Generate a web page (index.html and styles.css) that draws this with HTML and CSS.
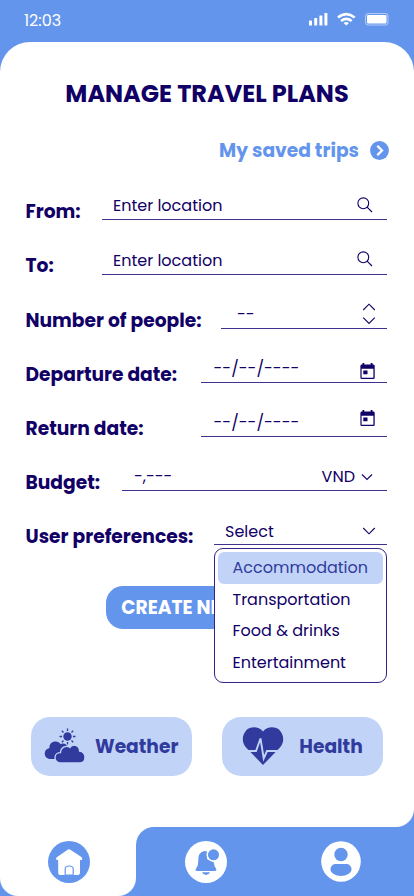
FILE: index.html
```html
<!DOCTYPE html>
<html lang="en">
<head>
<meta charset="utf-8">
<title>Manage travel plans</title>
<link rel="stylesheet" href="styles.css">
</head>
<body>
<div class="phone">
  <header class="status">
    <span class="time">12:03</span>
    <svg class="signals" width="82" height="16" viewBox="0 0 82 16" fill="#fff">
      <rect x="1" y="8.500" width="3" height="5" rx=".6"/><rect x="6.200" y="6" width="3" height="7.500" rx=".6"/><rect x="11.400" y="3.500" width="3" height="10" rx=".6"/><rect x="16.400" y="1" width="3" height="12.500" rx=".6"/>
      <g fill="none" stroke="#fff" stroke-width="2.500"><path d="M30 5.500Q38.300-1.300 46.700 5.500M33 9Q38.300 4.700 43.700 9"/></g><path d="M35.600 10.900Q38.300 8.900 41 10.900L38.300 13.500Z"/>
      <rect x="57.500" y="1.500" width="22.500" height="11.500" rx="2.500" fill="none" stroke="#fff" stroke-opacity=".5"/><rect x="59" y="3" width="19.500" height="8.500" rx="1"/>
    </svg>
  </header>
  <main class="sheet">
    <h1><span>MANAGE TRAVEL PLANS</span></h1>
    <a class="saved"><span>My saved trips</span>
      <svg width="19" height="19" viewBox="0 0 19 19"><circle cx="9.500" cy="9.500" r="9.400" fill="#6495ed"/><path d="M7.300 4.800L12 9.500L7.300 14.200" fill="none" stroke="#fff" stroke-width="2.300"/></svg>
    </a>
    <form class="fields">
      <div class="row"><label>From:</label><div class="field f-from"><span>Enter location</span><svg width="16" height="16" viewBox="0 0 16 16"><circle cx="6.300" cy="6.300" r="5.400"/><path d="M10.100 10.100L15 15"/></svg></div></div>
      <div class="row"><label>To:</label><div class="field f-from f-to"><span>Enter location</span><svg width="16" height="16" viewBox="0 0 16 16"><circle cx="6.300" cy="6.300" r="5.400"/><path d="M10.100 10.100L15 15"/></svg></div></div>
      <div class="row"><label>Number of people:</label><div class="field f-num"><span>--</span><svg width="14" height="22" viewBox="0 0 14 22"><path d="M1.200 7L7 1.200L12.800 7M1.200 14.700L7 20.500L12.800 14.700"/></svg></div></div>
      <div class="row"><label>Departure date:</label><div class="field f-date f-dep"><span>--/--/----</span><svg class="cal" width="15" height="17" viewBox="0 0 15 17"><path fill-rule="evenodd" d="M1.500 1.500H2.500V0H4.300V1.500H10.700V0H12.500V1.500H13.500Q14.700 1.700 14.700 3V14.700Q14.700 16 13.500 16H1.700Q.4 16 .4 14.700V3Q.4 1.600 1.500 1.500ZM1.600 5.700V14.800H13.400V5.700ZM3.300 7.500H7.500V11.300H3.300Z"/></svg></div></div>
      <div class="row"><label>Return date:</label><div class="field f-date f-ret"><span>--/--/----</span><svg class="cal" width="15" height="17" viewBox="0 0 15 17"><path fill-rule="evenodd" d="M1.500 1.500H2.500V0H4.300V1.500H10.700V0H12.500V1.500H13.500Q14.700 1.700 14.700 3V14.700Q14.700 16 13.500 16H1.700Q.4 16 .4 14.700V3Q.4 1.600 1.500 1.500ZM1.600 5.700V14.800H13.400V5.700ZM3.300 7.500H7.500V11.300H3.300Z"/></svg></div></div>
      <div class="row"><label>Budget:</label><div class="field f-bud"><span class="amount">-,---</span><span class="vnd">VND</span><svg width="12" height="8" viewBox="0 0 12 8"><path d="M1 1.500L6 6.500L11 1.500"/></svg></div></div>
      <div class="row"><label>User preferences:</label><div class="field f-pref"><span>Select</span><svg width="14" height="8" viewBox="0 0 14 8"><path d="M1.200 1L7 6.800L12.800 1"/></svg>
        <ul class="menu"><li class="active">Accommodation</li><li>Transportation</li><li>Food &amp; drinks</li><li>Entertainment</li></ul></div></div>
    </form>
    <button class="create">CREATE NEW</button>
    <div class="cards">
      <div class="card"><svg width="42" height="36" viewBox="0 0 42 36">
        <circle cx="23.500" cy="8.500" r="4.200"/><path class="rays" d="M23.500 .5V3M23.500 14V16.500M15.500 8.500H18M29 8.500H31.500M17.800 2.800L19.500 4.500M27.500 12.500L29.200 14.200M29.200 2.800L27.500 4.500M17.800 14.200L19.500 12.500"/>
        <path d="M6.500 31C3 31 .7 28.500 .7 25.500C.7 22.500 3 20.500 5.500 20C5 16 8 13.500 11.500 13.500C14 13.500 15.500 14.500 16.500 16C20 14.500 23 16.500 23.500 19V31Z"/>
        <path class="front" d="M16.500 35C13.500 35 11 32.800 11 29.700C11 26.500 13.500 24.700 16.500 24.700C16.500 19.500 22 16.800 26 19.500C28.500 15.700 35.300 16.500 35.600 23.200C38.800 23.200 41 26 41 29.200C40.800 32.500 38.500 35 35.500 35Z"/></svg><span>Weather</span></div>
      <div class="card health"><svg width="42" height="40" viewBox="0 0 42 40"><path d="M21 39L4.500 22C-1 16.500 0 8.500 5 3.500C10 .1 17 .7 21 5.500C25 .7 32 .1 37 3.500C42 8.500 43 16.500 37.500 22Z"/><path class="pulse" d="M4.500 25H14L18.500 12.500L21.700 32.500L25 25H37.500"/></svg><span>Health</span></div>
    </div>
  </main>
  <nav>
    <div class="home"><svg width="42" height="42" viewBox="0 0 42 42"><circle cx="21" cy="21" r="21" fill="#6495ed"/><path d="M9.500 15.700L20 8.500Q21 7.900 22 8.500L33 15.700Q35.300 17.500 33.500 19H32V32Q31.800 34 30 34H12Q10.300 34 10.200 32V19H9Q6.700 17.500 9.500 15.700Z" fill="#fff"/><path d="M17.200 34V28Q17.200 25 21.200 25Q25.200 25 25.200 28V34Z" fill="#fff" stroke="#6495ed" stroke-width="1.200"/></svg></div>
    <div class="rest"><svg width="42" height="42" viewBox="0 0 42 42"><circle cx="21" cy="21" r="21" fill="#fff"/><path d="M20 10C16 10.500 13.800 13 13.500 16.500C13 22 13.500 24.500 11 27.500Q9.700 30 12 30H30Q32 29.500 31 27.500Q29 25 28.700 21L22 18L22 10.500ZM17 31.300H25Q24 34 21 34Q18 34 17 31.300Z" fill="#6495ed"/><circle cx="28.500" cy="13.800" r="6.300" fill="#6495ed" stroke="#fff" stroke-width="1.500"/></svg><svg width="40" height="41" viewBox="0 0 40 41"><ellipse cx="20" cy="20.500" rx="19.800" ry="20.300" fill="#fff"/><circle cx="20" cy="13.500" r="6.700" fill="#6495ed"/><path d="M9.500 28.500C9.500 25 12 23 15 23H25C28 23 30.500 25 30.500 28.500C30.500 32 25.500 35 20 35S9.500 32 9.500 28.500Z" fill="#6495ed"/></svg></div>
  </nav>
</div>
</body>
</html>
```
FILE: styles.css
```css
* { box-sizing: border-box; }
body { margin: 0; font-family: Poppins, Inter, "Noto Sans", sans-serif; color: #110066; }
.phone { width: 414px; height: 896px; background: #6495ed; overflow: hidden; }
.status { height: 41.500px; display: flex; justify-content: space-between; padding: 12px 24px 0; color: #fff; font-size: 16px; line-height: 18px; }
.sheet { height: 785.500px; background: #fff; border-radius: 30px 30px 18px 0; overflow: hidden; }
h1 { margin: 35.500px 0 0; text-align: center; font-size: 24px; line-height: 34px; font-weight: 700; white-space: nowrap; }
.saved { display: flex; justify-content: flex-end; align-items: center; gap: 10.500px; height: 26px; margin: 26.400px 25.500px 0 0; color: #6495ed; font-size: 18.670px; font-weight: 700; }
.fields { margin-top: 15.100px; padding: 0 27px 0 25.500px; }
.row { display: flex; justify-content: space-between; align-items: flex-start; height: 54.070px; }
label { font-size: 18.670px; font-weight: 700; line-height: 28px; padding-top: 19.950px; white-space: nowrap; }
.field { position: relative; height: 42px; border-bottom: 1px solid #41308f; display: flex; align-items: center; padding: 14px 14px 0 11.500px; font-size: 16px; line-height: 20px; white-space: nowrap; }
.field > svg { margin: 0 0 2px auto; fill: none; stroke: #110066; stroke-width: 1.100; }
.f-from { width: 285.500px; }
.f-to { padding-top: 16px; }
.f-to > svg { margin-bottom: 4px; }
.f-num { width: 166px; padding: 16px 11px 0 16px; }
.f-date { width: 186.500px; padding: 16px 12px 0 13px; }
.field > .cal { fill: #110066; stroke: none; margin-bottom: -5px; }
.f-ret > .cal { margin-bottom: 10px; }
.f-bud { width: 265px; padding-left: 12px; }
.f-bud > svg { margin: 2px 0 0 6px; }
.amount { margin-top: 2px; }
.vnd { margin: 2px 0 0 auto; }
.f-pref { width: 173.500px; padding: 17px 11px 0 11.500px; }
.menu { position: absolute; z-index: 2; top: 45px; left: 0; width: 173.500px; height: 135px; margin: 0; padding: 3px; border: 1px solid #33228a; border-radius: 9px; background: #fff; list-style: none; }
.menu li { height: 31.700px; padding-left: 15px; line-height: 31.500px; border-radius: 6px; }
.menu .active { background: #c1d4f8; color: #313b9d; }
.create { display: block; width: 203px; height: 43.500px; margin: 29px auto 0 106.300px; padding: 0 15px; border: 0; border-radius: 17px; background: #6495ed; color: #fff; font: 700 18.670px Poppins, Inter, sans-serif; text-align: left; }
.cards { display: flex; gap: 29.500px; padding-left: 31px; margin-top: 87.500px; }
.card { width: 161.300px; height: 58.700px; display: flex; align-items: center; padding-left: 13px; gap: 9px; border-radius: 19px; background: #c1d4f8; color: #313b9d; font-size: 18.670px; font-weight: 700; }
.card svg { fill: #313b9d; flex: none; }
.card .rays { stroke: #313b9d; stroke-width: 1.300; }
.card .front { stroke: #c1d4f8; stroke-width: 1.300; }
.card .pulse { fill: none; stroke: #c1d4f8; stroke-width: 1.900; }
.health { padding-left: 20px; gap: 15.500px; }
nav { display: flex; height: 69px; background: linear-gradient(#fff 35px, #6495ed 35px); }
.home { width: 136.300px; padding: 14px 0 0 48px; background: #fff; border-radius: 0 0 18px 18px; }
.rest { flex: 1; display: flex; align-items: flex-start; gap: 94px; padding: 14px 0 0 49px; background: #6495ed; border-radius: 18px 0 0 0; }
```
